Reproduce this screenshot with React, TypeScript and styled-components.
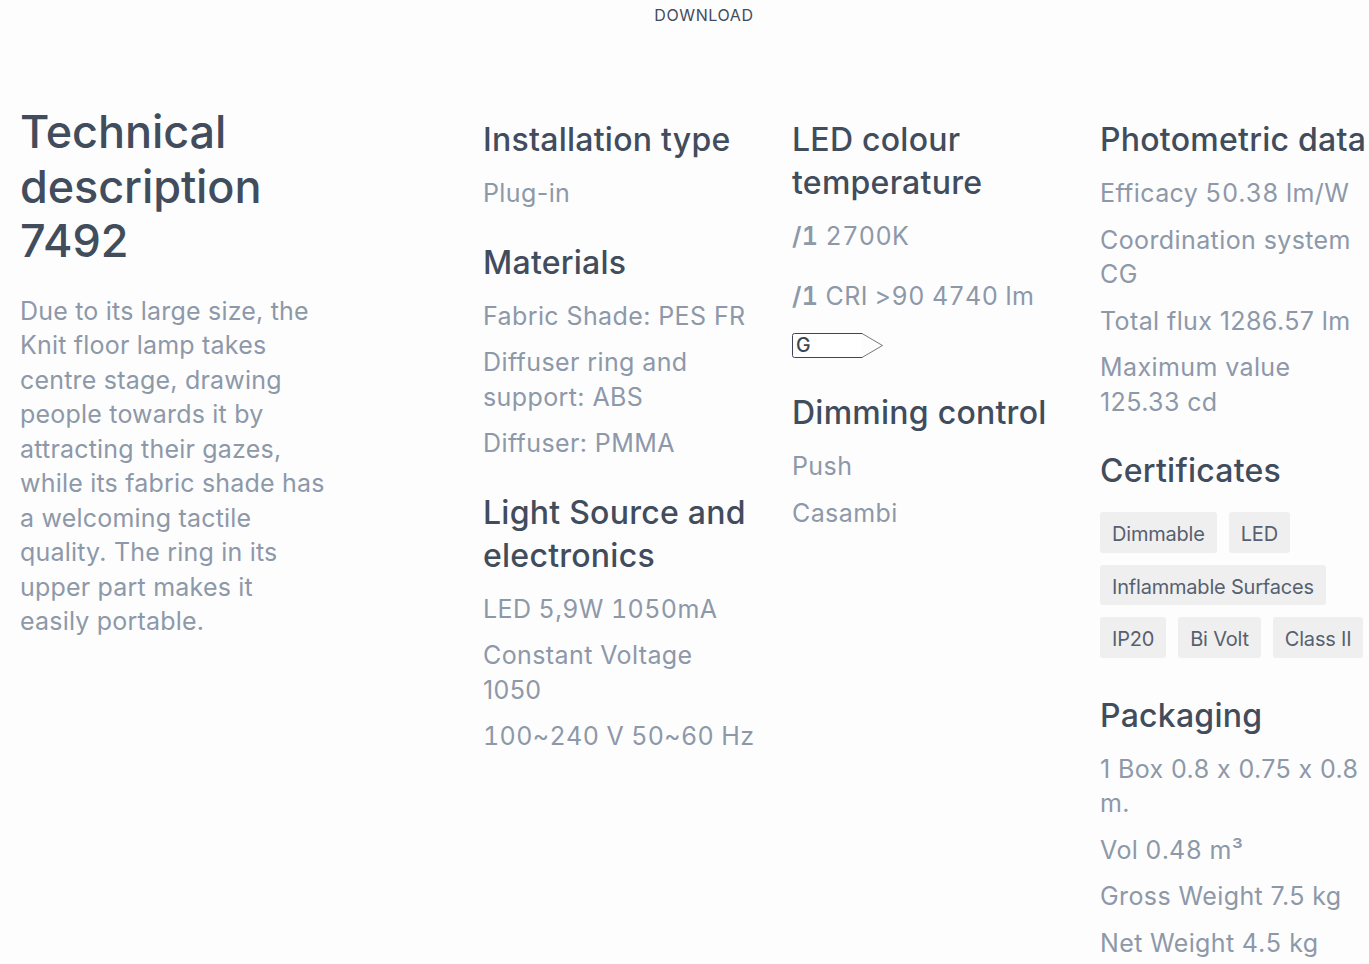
import React from 'react';
import styled, { createGlobalStyle } from 'styled-components';

const GlobalStyle = createGlobalStyle`
  html, body {
    margin: 0;
    padding: 0;
    height: 964px;
    overflow: hidden;
    background: #fdfdfd;
    font-family: Inter, "Noto Sans", sans-serif;
    font-feature-settings: "calt" 0;
  }
`;

const Page = styled.div`
  width: 1369px;
  height: 964px;
  overflow: hidden;
`;

const Download = styled.div`
  text-align: center;
  font-size: 16px;
  line-height: 20px;
  padding-top: 5px;
  padding-left: 39px;
  letter-spacing: 0.6px;
  color: #414c5c;
`;

const Layout = styled.div`
  display: grid;
  grid-template-columns: 463px 309px 308px 300px;
  padding: 80px 0 0 20px;
`;

const Intro = styled.div`
  width: 306px;
`;

const Title = styled.h1`
  margin: 0 0 25.5px;
  font-size: 45px;
  line-height: 54.5px;
  font-weight: 500;
  letter-spacing: -0.1px;
  color: #414c5c;
`;

const Lead = styled.p`
  margin: 0;
  font-size: 25px;
  line-height: 34.45px;
  letter-spacing: 0.2px;
  color: #8d98a9;
`;

const Column = styled.div`
  padding-top: 13px;
  width: 272px;
`;

const Heading = styled.h2`
  margin: 0 0 15px;
  font-size: 32px;
  line-height: 43px;
  font-weight: 500;
  letter-spacing: 0.25px;
  color: #414c5c;
`;

const Section = styled.section`
  margin-bottom: 30px;
`;

const Line = styled.p<{ $gap?: number; $tabular?: boolean }>`
  margin: 0 0 ${(p) => p.$gap ?? 12}px;
  font-size: 25px;
  line-height: 34.5px;
  letter-spacing: 0.4px;
  font-feature-settings: "calt" 0, "tnum" ${(p) => (p.$tabular ? 1 : 0)};
  color: #8d98a9;
`;

const Strong = styled.b`
  font-weight: 600;
`;

const Tags = styled.div`
  display: flex;
  flex-wrap: wrap;
  gap: 12px;
  margin: 20px 0 36px;
`;

const Tag = styled.span`
  box-sizing: border-box;
  padding: 4px 12px 0;
  height: 40.5px;
  display: flex;
  align-items: center;
  background: #efefef;
  border-radius: 3px;
  font-size: 20px;
  letter-spacing: -0.2px;
  color: #566070;
`;

const LabelIcon = styled.svg`
  display: block;
  margin: 19px 0 32px;
`;

const EnergyLabel = () => (
  <LabelIcon width="92" height="27" viewBox="0 0 92 27">
    <path d="M70 1.5L90.5 13.5L70 25.5" fill="none" stroke="#555" strokeWidth="0.8" />
    <path d="M70 1.5H2.5a2 2 0 0 0-2 2V23.5a2 2 0 0 0 2 2H70" fill="#fff" stroke="#3d4653" />
    <text x="4" y="20" fontSize="19.5" fontWeight="500" fontFamily="Inter, sans-serif" fill="#3d4653">G</text>
  </LabelIcon>
);

export default function App() {
  return (
    <Page>
      <GlobalStyle />
      <Download>DOWNLOAD</Download>
      <Layout>
        <Intro>
          <Title>Technical description 7492</Title>
          <Lead>
            Due to its large size, the Knit floor lamp takes centre stage, drawing people towards it by attracting their gazes, while its fabric shade has a welcoming tactile quality. The ring in its upper part makes it easily portable.
          </Lead>
        </Intro>
        <Column>
          <Section>
            <Heading>Installation type</Heading>
            <Line>Plug-in</Line>
          </Section>
          <Section>
            <Heading>Materials</Heading>
            <Line>Fabric Shade: PES FR</Line>
            <Line>Diffuser ring and support: ABS</Line>
            <Line>Diffuser: PMMA</Line>
          </Section>
          <Section>
            <Heading>Light Source and electronics</Heading>
            <Line $tabular>LED 5,9W 1050mA</Line>
            <Line>Constant Voltage 1050</Line>
            <Line $tabular>100~240 V 50~60 Hz</Line>
          </Section>
        </Column>
        <Column>
          <Section>
            <Heading>LED colour temperature</Heading>
            <Line $gap={25} $tabular><Strong>/1</Strong> 2700K</Line>
            <Line $tabular><Strong>/1</Strong> CRI &gt;90 4740 lm</Line>
            <EnergyLabel />
          </Section>
          <Section>
            <Heading>Dimming control</Heading>
            <Line>Push</Line>
            <Line>Casambi</Line>
          </Section>
        </Column>
        <Column>
          <Section>
            <Heading>Photometric data</Heading>
            <Line $tabular>Efficacy 50.38 lm/W</Line>
            <Line>Coordination system CG</Line>
            <Line>Total flux 1286.57 lm</Line>
            <Line>Maximum value 125.33 cd</Line>
          </Section>
          <Section>
            <Heading>Certificates</Heading>
            <Tags>
              <Tag>Dimmable</Tag>
              <Tag>LED</Tag>
              <Tag>Inflammable Surfaces</Tag>
              <Tag>IP20</Tag>
              <Tag>Bi Volt</Tag>
              <Tag>Class II</Tag>
            </Tags>
          </Section>
          <Section>
            <Heading>Packaging</Heading>
            <Line>1 Box 0.8 x 0.75 x 0.8 m.</Line>
            <Line $tabular>Vol 0.48 m³</Line>
            <Line>Gross Weight 7.5 kg</Line>
            <Line $tabular>Net Weight 4.5 kg</Line>
          </Section>
        </Column>
      </Layout>
    </Page>
  );
}
